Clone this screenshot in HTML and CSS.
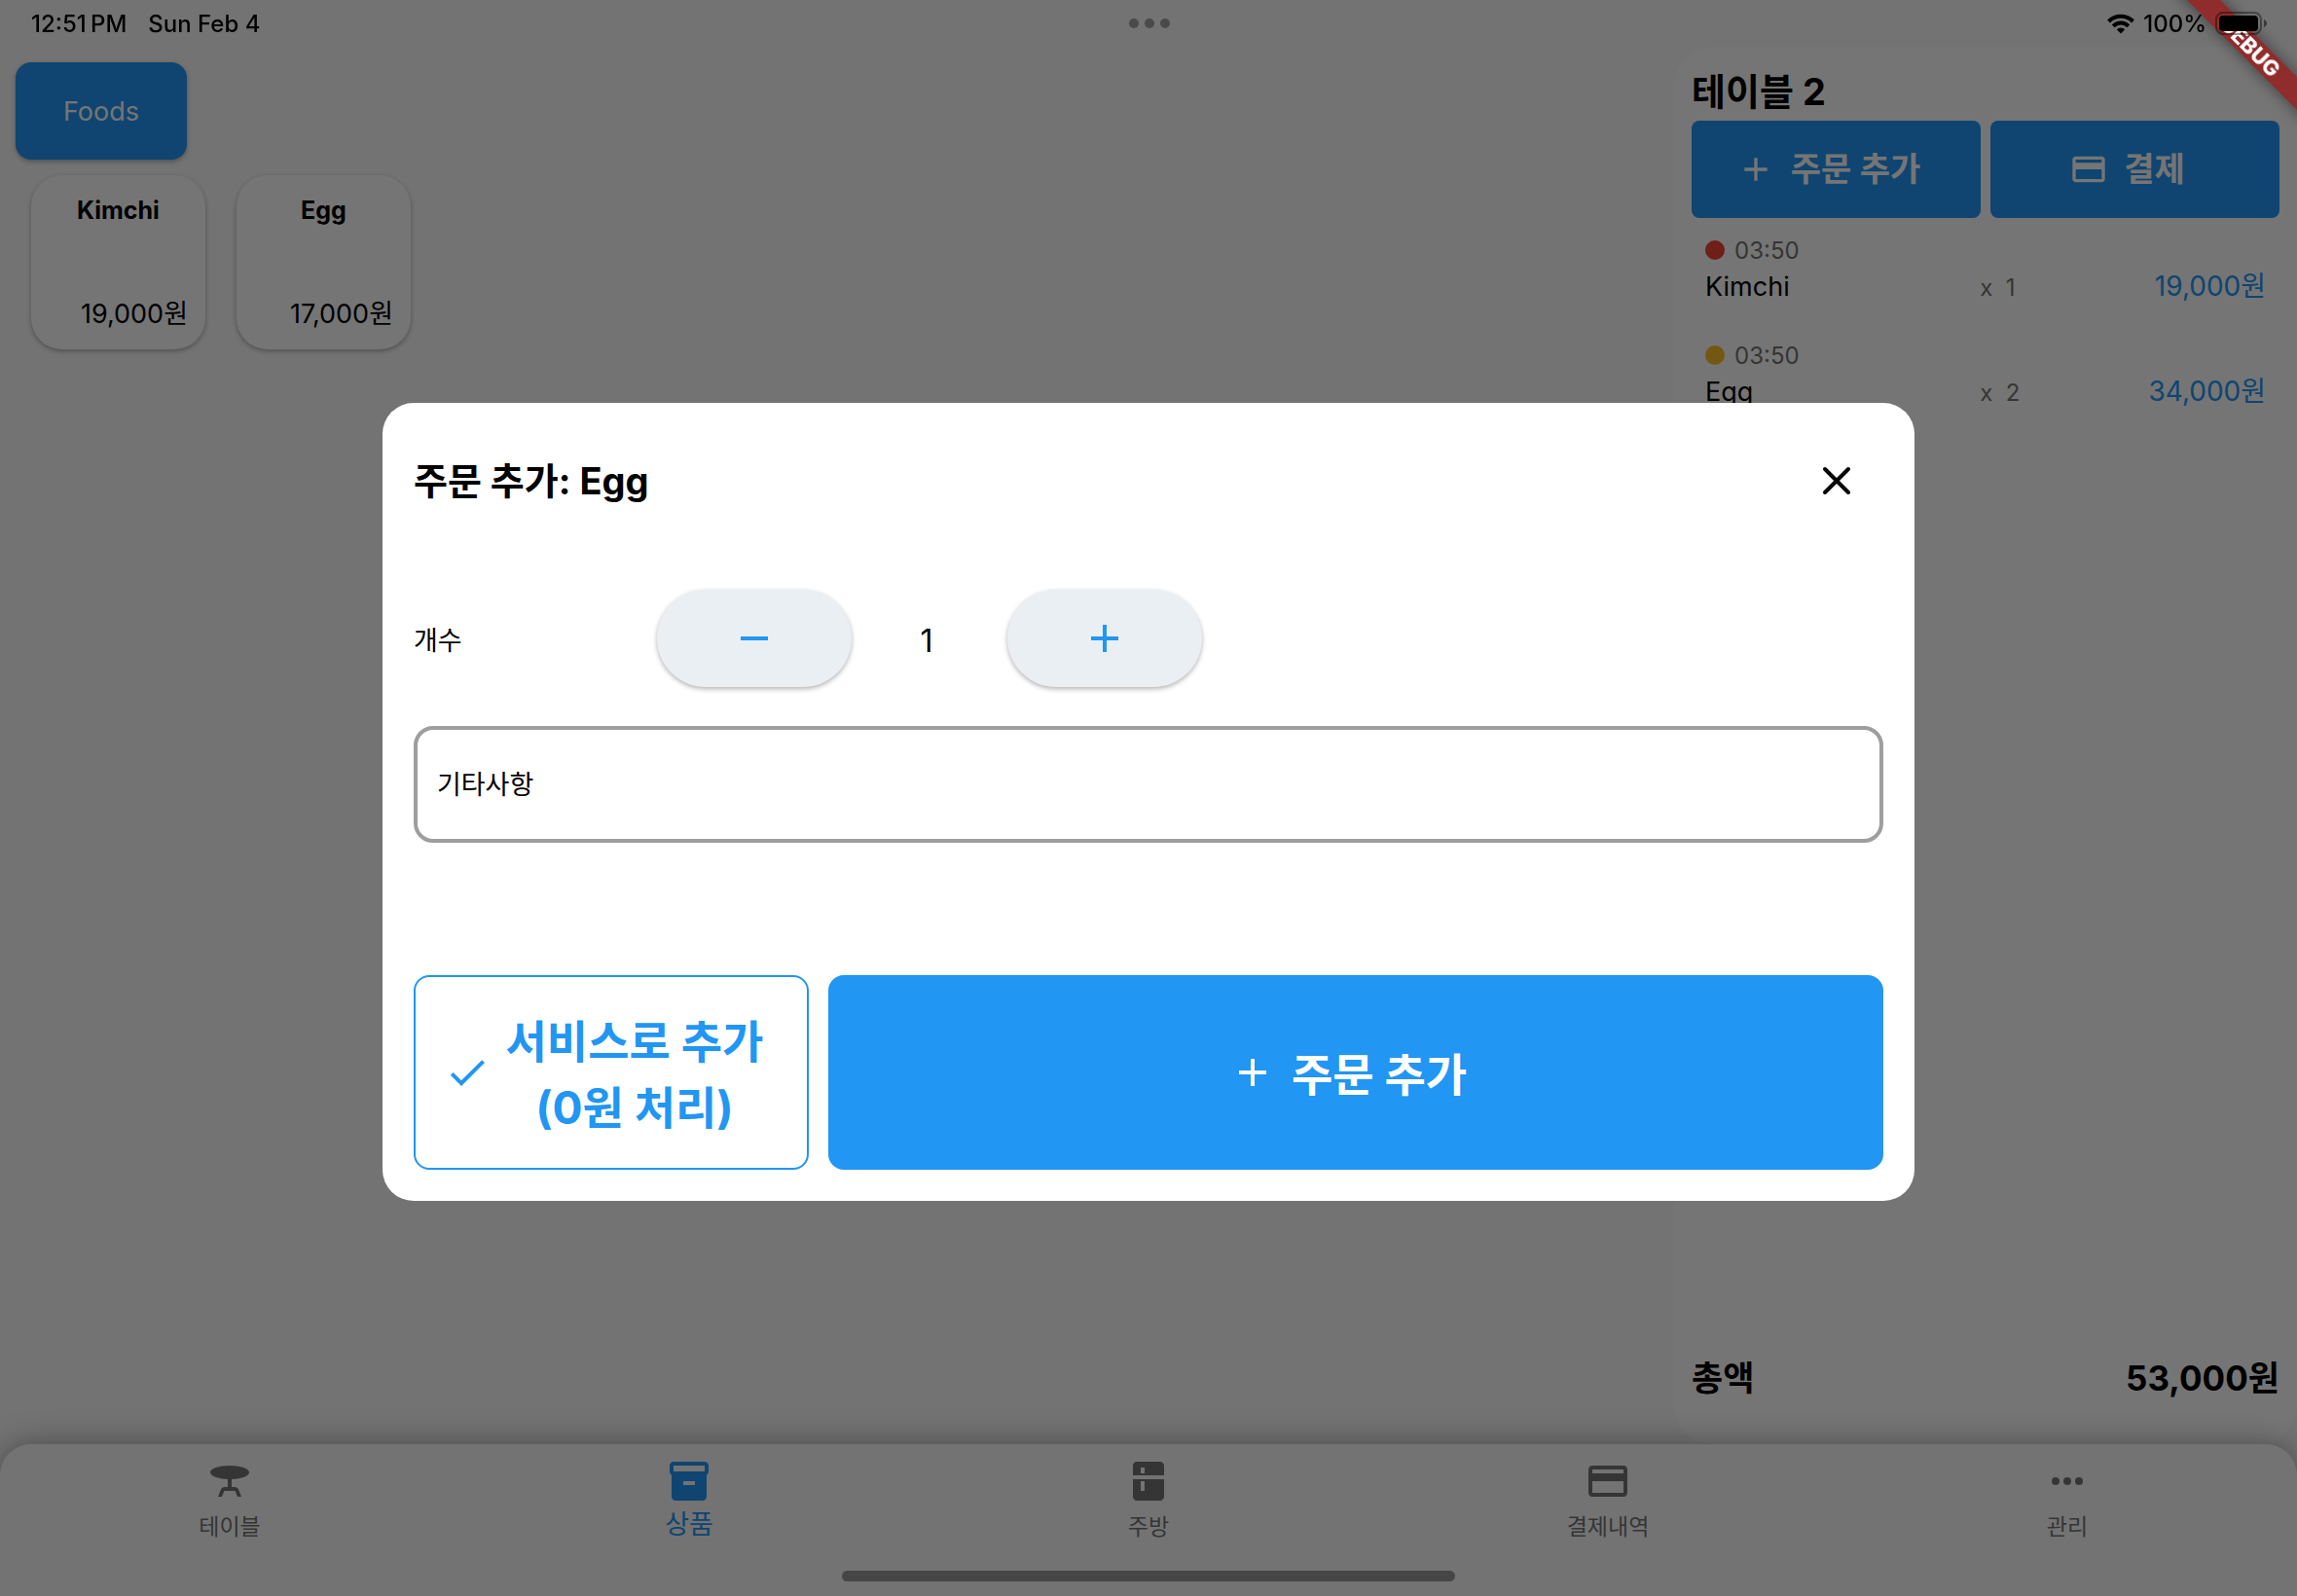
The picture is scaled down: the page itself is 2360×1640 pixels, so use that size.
FILE: index.html
```html
<!DOCTYPE html>
<html lang="ko">
<head>
<meta charset="utf-8">
<meta name="viewport" content="width=device-width, initial-scale=1">
<title>테이블 2</title>
<link rel="stylesheet" href="styles.css">
</head>
<body>
<svg class="symbols" aria-hidden="true">
  <symbol id="icon-add" viewBox="0 0 24 24"><path d="M19 13h-6v6h-2v-6H5v-2h6V5h2v6h6v2z"/></symbol>
  <symbol id="icon-remove" viewBox="0 0 24 24"><path d="M19 13H5v-2h14v2z"/></symbol>
  <symbol id="icon-check" viewBox="0 0 24 24"><path d="M9 16.17L4.83 12l-1.42 1.41L9 19 21 7l-1.41-1.41z"/></symbol>
  <symbol id="icon-close" viewBox="0 0 24 24"><path d="M6 6l12 12M18 6L6 18" fill="none" stroke="currentColor" stroke-width="2" stroke-linecap="round"/></symbol>
  <symbol id="icon-card" viewBox="0 0 24 24"><path d="M20 4H4c-1.11 0-1.99.89-1.99 2L2 18c0 1.11.89 2 2 2h16c1.11 0 2-.89 2-2V6c0-1.11-.89-2-2-2zm0 14H4v-6h16v6zm0-10H4V6h16v2z"/></symbol>
  <symbol id="icon-table" viewBox="0 0 24 24"><path d="M22 7.5C22 5.57 17.52 4 12 4S2 5.57 2 7.5c0 1.81 3.95 3.31 9 3.48V15H9.35c-.82 0-1.55.5-1.86 1.26L6 20h2l1.2-3h5.6l1.2 3h2l-1.5-3.74C16.2 15.5 15.46 15 14.65 15H13v-4.02c5.05-.17 9-1.67 9-3.48z"/></symbol>
  <symbol id="icon-box" viewBox="0 0 24 24"><path d="M20 2H4C3 2 2 2.9 2 4v3.01C2 7.73 2.43 8.35 3 8.7V20c0 1.1 1.1 2 2 2h14c.9 0 2-.9 2-2V8.7c.57-.35 1-.97 1-1.69V4c0-1.1-1-2-2-2zm-5 12H9v-2h6v2zm5-7H4V4h16v3z"/></symbol>
  <symbol id="icon-fridge" viewBox="0 0 24 24"><path fill-rule="evenodd" d="M4 9V4c0-1.1.9-2 2-2h12c1.1 0 2 .9 2 2v5H4zM8 5v3h2V5H8zM4 11h16v9c0 1.1-.9 2-2 2H6c-1.1 0-2-.9-2-2v-9zm4 1v5h2v-5H8z"/></symbol>
  <symbol id="icon-more" viewBox="0 0 24 24"><circle cx="6" cy="12" r="2"/><circle cx="12" cy="12" r="2"/><circle cx="18" cy="12" r="2"/></symbol>
</svg>

<div class="app">
  <header class="status">
    <div class="status-side"><span>12:51&#8201;PM</span><span>Sun Feb 4</span></div>
    <div class="status-dots"><i></i><i></i><i></i></div>
    <div class="status-side status-right">
      <svg class="wifi" viewBox="0 0 28 21" aria-hidden="true">
        <g fill="none" stroke="currentColor" stroke-width="4"><path d="M1.5 8a17.600 17.600 0 0 1 25 0"/><path d="M6.200 12.800a11 11 0 0 1 15.600 0"/></g>
        <path d="M14 20.500l-4.200-4.200a6 6 0 0 1 8.400 0z"/>
      </svg>
      <span>100%</span>
      <svg class="battery" viewBox="0 0 54 24" aria-hidden="true">
        <rect x="1" y="1" width="46" height="22" rx="7" fill="none" stroke="currentColor" stroke-opacity=".4" stroke-width="2"/>
        <rect x="4" y="4" width="40" height="16" rx="4"/>
        <path d="M50 8c4 1.500 4 6.500 0 8z" fill-opacity=".5"/>
      </svg>
    </div>
  </header>

  <div class="content">
    <main class="menu">
      <button class="category" type="button">Foods</button>
      <div class="products">
        <button class="product" type="button"><strong>Kimchi</strong><span>19,000원</span></button>
        <button class="product" type="button"><strong>Egg</strong><span>17,000원</span></button>
      </div>
    </main>

    <aside class="order">
      <h1 class="heading">테이블 2</h1>
      <div class="order-actions">
        <button class="action" type="button"><svg class="icon"><use href="#icon-add"/></svg><span>주문 추가</span></button>
        <button class="action" type="button"><svg class="icon"><use href="#icon-card"/></svg><span>결제</span></button>
      </div>
      <ul class="lines">
        <li class="line">
          <div class="line-time"><i class="dot dot-red"></i>03:50</div>
          <div class="line-detail"><span>Kimchi</span><span class="qty">x&nbsp; 1</span><span class="price">19,000원</span></div>
        </li>
        <li class="line">
          <div class="line-time"><i class="dot dot-amber"></i>03:50</div>
          <div class="line-detail"><span>Egg</span><span class="qty">x&nbsp; 2</span><span class="price">34,000원</span></div>
        </li>
      </ul>
      <div class="total"><span>총액</span><span>53,000원</span></div>
    </aside>
  </div>

  <nav class="tabs">
    <a class="tab" href="#tables"><svg class="icon icon-large"><use href="#icon-table"/></svg>테이블</a>
    <a class="tab tab-active" href="#products"><svg class="icon icon-large"><use href="#icon-box"/></svg>상품</a>
    <a class="tab" href="#kitchen"><svg class="icon icon-large"><use href="#icon-fridge"/></svg>주방</a>
    <a class="tab" href="#payments"><svg class="icon icon-large"><use href="#icon-card"/></svg>결제내역</a>
    <a class="tab" href="#manage"><svg class="icon icon-large"><use href="#icon-more"/></svg>관리</a>
  </nav>
</div>

<div class="scrim">
  <section class="dialog" role="dialog" aria-modal="true" aria-labelledby="dialog-title">
    <div class="dialog-head">
      <h2 class="heading" id="dialog-title">주문 추가: Egg</h2>
      <button class="close" type="button" aria-label="닫기"><svg class="icon icon-large"><use href="#icon-close"/></svg></button>
    </div>
    <div class="count">
      <span class="count-label" id="count-label">개수</span>
      <button class="step" type="button" aria-label="빼기"><svg class="icon icon-large"><use href="#icon-remove"/></svg></button>
      <output class="count-value" aria-labelledby="count-label">1</output>
      <button class="step" type="button" aria-label="더하기"><svg class="icon icon-large"><use href="#icon-add"/></svg></button>
    </div>
    <input class="note" type="text" placeholder="기타사항" aria-label="기타사항">
    <div class="dialog-actions">
      <button class="big big-outline" type="button"><svg class="icon icon-large"><use href="#icon-check"/></svg><span>서비스로 추가<br>(0원 처리)</span></button>
      <button class="big big-fill" type="button"><svg class="icon icon-large"><use href="#icon-add"/></svg><span>주문 추가</span></button>
    </div>
  </section>
</div>

<div class="banner" aria-hidden="true"><div class="ribbon">DEBUG</div></div>
<div class="home-bar"></div>
</body>
</html>
```

FILE: styles.css
```css
:root {
  --blue: #2196f3;
  --muted: #757575;
}

* { box-sizing: border-box; }

body {
  margin: 0;
  background: #fafafa;
  color: #000;
  font-family: Inter, "Noto Sans CJK KR", sans-serif;
  font-size: 27px;
}

button, input {
  margin: 0;
  padding: 0;
  border: 0;
  font: inherit;
  color: inherit;
}

.symbols { position: absolute; width: 0; height: 0; }
.icon { flex: none; width: 40px; height: 40px; fill: currentColor; }
.icon-large { width: 48px; height: 48px; }
.heading { margin: 0; font-size: 38px; font-weight: 700; line-height: 56px; }

.app { display: flex; flex-direction: column; min-height: 100vh; }

/* Status bar */
.status {
  position: relative;
  z-index: 30;
  display: flex;
  align-items: center;
  height: 48px;
  padding: 0 30px 0 32px;
  font-size: 24px;
  font-weight: 500;
}
.status-side { flex: 1; display: flex; align-items: center; gap: 22px; }
.status-right { justify-content: flex-end; gap: 9px; }
.status-dots { display: flex; gap: 6px; }
.status-dots i { width: 10px; height: 10px; border-radius: 50%; background: #4a4a4a; }
.wifi { width: 28px; height: 21px; }
.battery { width: 54px; height: 24px; }

/* Product menu */
.content { flex: 1; display: flex; }
.menu { flex: 1; padding: 16px; }
.category {
  display: block;
  width: 176px;
  height: 100px;
  border-radius: 16px;
  background: var(--blue);
  color: #fff;
  box-shadow: 0 2px 5px rgba(0, 0, 0, .3);
}
.products { display: flex; flex-wrap: wrap; gap: 32px; padding: 16px; }
.product {
  display: flex;
  flex-direction: column;
  justify-content: space-between;
  width: 179px;
  height: 179px;
  padding: 18px;
  border-radius: 32px;
  background: #fff;
  box-shadow: 0 2px 5px rgba(0, 0, 0, .3);
  line-height: 36px;
  text-align: right;
}
.product strong { font-size: 25px; font-weight: 700; text-align: center; }

/* Order panel */
.order {
  display: flex;
  flex-direction: column;
  width: 640px;
  padding: 18px;
  border-radius: 40px;
  background: #fff;
}
.order-actions { display: flex; gap: 10px; padding-top: 2px; }
.action {
  flex: 1;
  display: flex;
  align-items: center;
  justify-content: center;
  gap: 16px;
  height: 100px;
  padding-right: 16px;
  border-radius: 8px;
  background: var(--blue);
  color: #fff;
  font-size: 34px;
  font-weight: 600;
}
.action span { padding-bottom: 5px; }
.lines { flex: 1; margin: 0; padding: 0; list-style: none; }
.line { padding: 16px 14px 18px; }
.line-time { display: flex; align-items: center; gap: 10px; height: 34px; color: var(--muted); font-size: 24px; }
.line-detail { display: grid; grid-template-columns: 49% auto 1fr; align-items: baseline; height: 40px; line-height: 40px; }
.dot { width: 20px; height: 20px; border-radius: 50%; }
.dot-red { background: #f44336; }
.dot-amber { background: #fbc02d; }
.qty { color: var(--muted); font-size: 24px; }
.price { color: var(--blue); font-size: 28px; text-align: right; }
.total { display: flex; justify-content: space-between; padding-bottom: 25px; font-size: 35px; font-weight: 700; line-height: 50px; }

/* Bottom tabs */
.tabs {
  position: relative;
  display: flex;
  height: 156px;
  padding-top: 14px;
  border-radius: 32px 32px 0 0;
  background: #fafafa;
  box-shadow: 0 0 32px rgba(0, 0, 0, .36);
}
.tab {
  flex: 1;
  display: flex;
  flex-direction: column;
  align-items: center;
  color: var(--muted);
  font-size: 23px;
  line-height: 46px;
  text-decoration: none;
}
.tab-active { color: var(--blue); font-size: 27px; line-height: 42px; }

/* Dialog */
.scrim {
  position: fixed;
  inset: 0;
  z-index: 10;
  display: flex;
  align-items: center;
  justify-content: center;
  padding: 48px 0 40px;
  background: rgba(0, 0, 0, .54);
}
.dialog {
  width: 66.7%;
  padding: 32px;
  border-radius: 32px;
  background: #fff;
}
.dialog-head { display: flex; align-items: center; justify-content: space-between; height: 96px; }
.close { display: flex; padding: 24px; background: none; }
.count { display: flex; align-items: center; padding: 64px 0 40px; }
.count-label { width: 250px; }
.step {
  display: flex;
  align-items: center;
  justify-content: center;
  width: 200px;
  height: 100px;
  border-radius: 50px;
  background: #eaeff4;
  color: var(--blue);
  box-shadow: 0 2px 5px rgba(0, 0, 0, .3);
}
.count-value { width: 160px; padding: 4px 6px 0 0; font-size: 32px; text-align: center; }
.note {
  display: block;
  width: 100%;
  height: 120px;
  padding: 0 20px;
  border: 4px solid #9e9e9e;
  border-radius: 20px;
  background: #fff;
}
.note::placeholder { color: #000; opacity: 1; }
.dialog-actions { display: flex; gap: 20px; padding-top: 136px; }
.big {
  display: flex;
  align-items: center;
  justify-content: center;
  gap: 16px;
  height: 200px;
  border-radius: 16px;
  font-size: 46px;
  font-weight: 700;
  line-height: 68px;
}
.big span { padding-top: 4px; }
.big-outline { width: 406px; padding-right: 16px; border: 2px solid var(--blue); background: #fff; color: var(--blue); }
.big-fill { flex: 1; padding-right: 16px; background: var(--blue); color: #fff; }

/* Debug ribbon and home indicator */
.banner {
  position: fixed;
  top: 0;
  right: 0;
  z-index: 20;
  width: 160px;
  height: 160px;
  overflow: hidden;
}
.ribbon {
  position: absolute;
  top: 36px;
  left: 12px;
  width: 200px;
  height: 24px;
  background: #912c2c;
  box-shadow: 0 0 16px rgba(0, 0, 0, .5);
  color: #fff;
  font-size: 22px;
  font-weight: 800;
  line-height: 24px;
  text-align: center;
  transform: rotate(45deg);
}
.home-bar {
  position: fixed;
  bottom: 15px;
  left: 50%;
  z-index: 30;
  width: 630px;
  height: 11px;
  border-radius: 6px;
  background: #464646;
  transform: translateX(-50%);
}
```
